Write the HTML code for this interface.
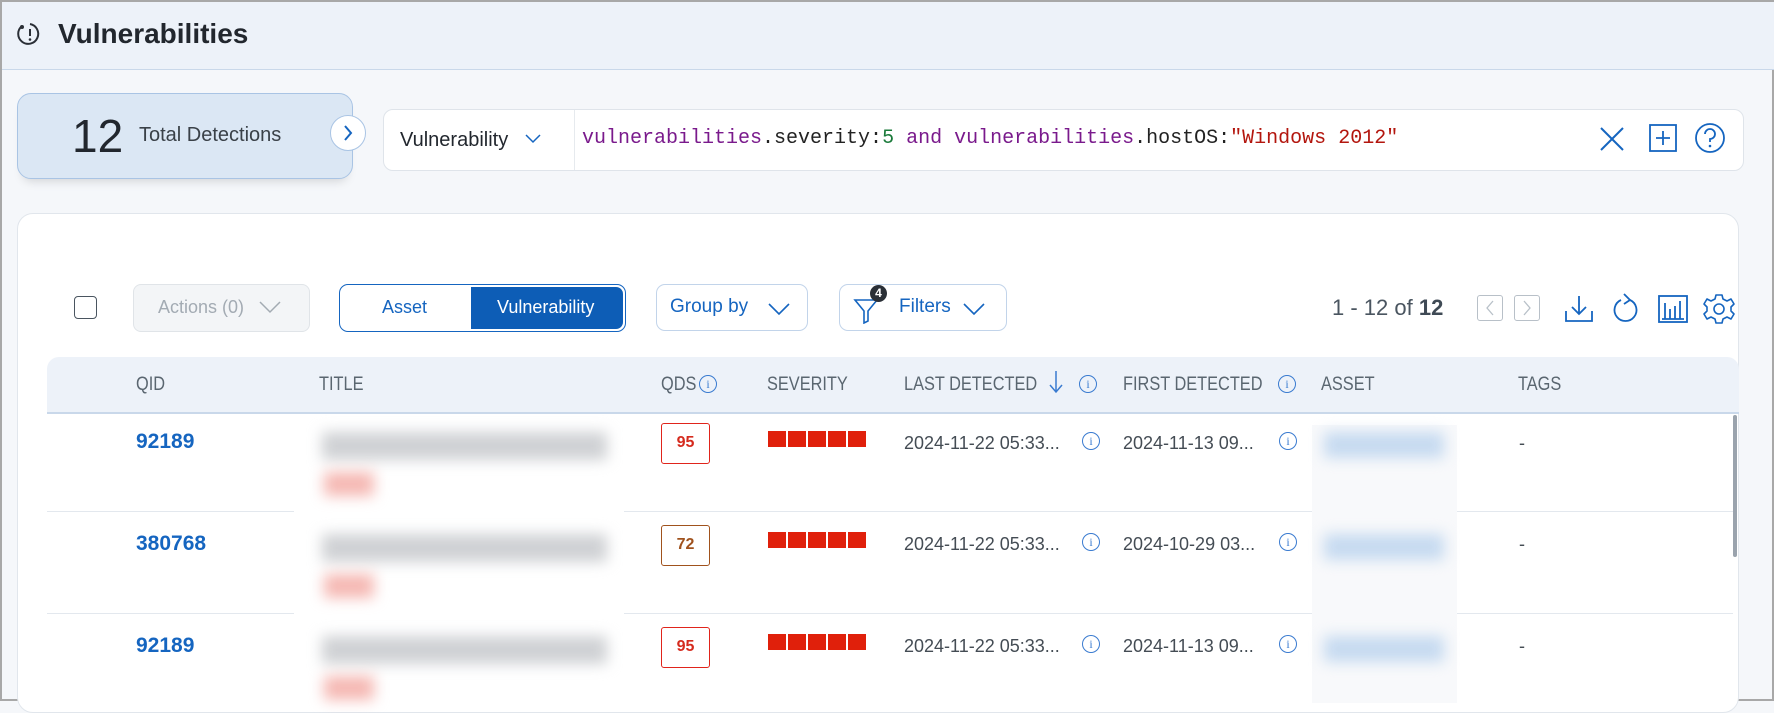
<!DOCTYPE html>
<html><head><meta charset="utf-8"><style>
*{box-sizing:border-box;margin:0;padding:0}
body{width:1774px;height:701px;overflow:hidden;background:#f5f7fa;font-family:"Liberation Sans",sans-serif;position:relative;border:2px solid #a8a8a8}
.abs{position:absolute}
.hdr{left:0;top:0;width:1774px;height:68px;background:#edf2f9;border-bottom:1px solid #c9d8ea}
.blur{filter:blur(7px)}
.th{top:355px;font-size:19px;color:#5a6670;line-height:55px;transform:scaleX(0.86);transform-origin:left center;white-space:nowrap}
.qid{font-size:21px;font-weight:bold;color:#1565c0}
.dt{font-size:18px;color:#444c54;white-space:nowrap}
.badge{width:49px;height:41px;border:1.5px solid #e0241b;border-radius:3px;font-size:16px;font-weight:bold;color:#d52b1e;text-align:center;line-height:38px;background:#fff}
.sev{height:16px;display:flex;gap:2px}
.sev i{display:block;width:18px;height:16px;background:#e0200b}
.info{width:18px;height:18px;border:1.3px solid #3a7bd0;border-radius:50%;color:#3a7bd0;font-size:12px;text-align:center;line-height:16px;font-family:"Liberation Serif",serif}
.line{height:1px;background:#e3e8ee}
</style></head><body>
<div class="abs hdr"></div>
<svg class="abs" style="left:14px;top:18px" width="28" height="28" viewBox="0 0 28 28"><path d="M6 6 A10 10 0 1 0 14 4" fill="none" stroke="#2a2f36" stroke-width="2"/><circle cx="6" cy="7" r="2" fill="#2a2f36"/><line x1="14" y1="9" x2="14" y2="16" stroke="#2a2f36" stroke-width="2"/><circle cx="14" cy="19.5" r="1.3" fill="#2a2f36"/></svg>
<div class="abs" style="left:56px;top:16px;font-size:28px;font-weight:bold;color:#22272e">Vulnerabilities</div>

<div class="abs" style="left:15px;top:91px;width:336px;height:86px;background:#dbe7f4;border:1px solid #a9c4e4;border-radius:14px;box-shadow:0 8px 10px -6px rgba(0,0,0,.15)"></div>
<div class="abs" style="left:70px;top:107px;font-size:46px;color:#22272e">12</div>
<div class="abs" style="left:137px;top:122px;font-size:20px;color:#3a4148">Total Detections</div>
<div class="abs" style="left:328px;top:113px;width:36px;height:36px;border-radius:50%;background:#fff;border:1px solid #a9c4e4"></div>
<svg class="abs" style="left:338px;top:122px" width="16" height="18"><path d="M5 2 L11 9 L5 16" fill="none" stroke="#1565c0" stroke-width="2"/></svg>

<div class="abs" style="left:381px;top:107px;width:1361px;height:62px;background:#fff;border:1px solid #dfe4ea;border-radius:10px"></div>
<div class="abs" style="left:572px;top:108px;width:1px;height:60px;background:#e6eaee"></div>
<div class="abs" style="left:398px;top:127px;font-size:20px;color:#22272e">Vulnerability</div>
<svg class="abs" style="left:523px;top:131px" width="16" height="12"><path d="M1 2 L8 9 L15 2" fill="none" stroke="#1565c0" stroke-width="1.5"/></svg>
<div class="abs" style="left:580px;top:125px;font-family:'Liberation Mono',monospace;font-size:20px;color:#222;white-space:pre"><span style="color:#7a1a8c">vulnerabilities</span>.severity:<span style="color:#1a7a3a">5</span> <span style="color:#7a1a8c">and</span> <span style="color:#7a1a8c">vulnerabilities</span>.hostOS:<span style="color:#b3160e">"Windows 2012"</span></div>
<svg class="abs" style="left:1597px;top:124px" width="26" height="26"><path d="M2 2 L24 24 M24 2 L2 24" stroke="#1565c0" stroke-width="2"/></svg>
<svg class="abs" style="left:1647px;top:122px" width="28" height="28"><rect x="1" y="1" width="26" height="26" fill="none" stroke="#1565c0" stroke-width="1.8"/><path d="M14 7 V21 M7 14 H21" stroke="#1565c0" stroke-width="1.8"/></svg>
<svg class="abs" style="left:1692px;top:120px" width="32" height="32"><circle cx="16" cy="16" r="14" fill="none" stroke="#1565c0" stroke-width="1.8"/><path d="M11 12 A5 5 0 1 1 16 17 V20" fill="none" stroke="#1565c0" stroke-width="1.8"/><circle cx="16" cy="24" r="1.3" fill="#1565c0"/></svg>

<div class="abs" style="left:15px;top:211px;width:1722px;height:500px;background:#fff;border:1px solid #e1e6ec;border-radius:16px"></div>

<div class="abs" style="left:72px;top:294px;width:23px;height:23px;border:1.5px solid #4a5560;border-radius:4px"></div>
<div class="abs" style="left:131px;top:282px;width:177px;height:48px;background:#f3f5f7;border:1px solid #e0e4e8;border-radius:8px"></div>
<div class="abs" style="left:156px;top:295px;font-size:18px;color:#a3abb3">Actions (0)</div>
<svg class="abs" style="left:257px;top:298px" width="22" height="14"><path d="M1 2 L11 12 L21 2" fill="none" stroke="#a3abb3" stroke-width="1.5"/></svg>
<div class="abs" style="left:337px;top:282px;width:287px;height:48px;border:1.5px solid #1565c0;border-radius:9px;background:#fff"></div>
<div class="abs" style="left:469px;top:285px;width:152px;height:42px;background:#0d5db6;border-radius:0 7px 7px 0"></div>
<div class="abs" style="left:380px;top:295px;font-size:18px;color:#1565c0">Asset</div>
<div class="abs" style="left:495px;top:295px;font-size:18px;color:#fff">Vulnerability</div>
<div class="abs" style="left:654px;top:282px;width:152px;height:47px;border:1px solid #c2d4ea;border-radius:9px"></div>
<div class="abs" style="left:668px;top:294px;font-size:19px;color:#1565c0">Group by</div>
<svg class="abs" style="left:766px;top:300px" width="22" height="14"><path d="M1 2 L11 12 L21 2" fill="none" stroke="#1565c0" stroke-width="1.6"/></svg>
<div class="abs" style="left:837px;top:282px;width:168px;height:47px;border:1px solid #c2d4ea;border-radius:9px"></div>
<svg class="abs" style="left:851px;top:292px" width="28" height="30"><path d="M2 6 H24 L15 17 V27 L11 29 V17 Z" fill="none" stroke="#1565c0" stroke-width="1.6"/></svg>
<div class="abs" style="left:868px;top:283px;width:17px;height:17px;border-radius:50%;background:#2a2f36;color:#fff;font-size:12px;font-weight:bold;text-align:center;line-height:17px">4</div>
<div class="abs" style="left:897px;top:294px;font-size:19px;color:#1565c0">Filters</div>
<svg class="abs" style="left:961px;top:300px" width="22" height="14"><path d="M1 2 L11 12 L21 2" fill="none" stroke="#1565c0" stroke-width="1.6"/></svg>

<div class="abs" style="left:1330px;top:293px;font-size:22px;color:#4a5560">1 - 12 of <b style="color:#3f4a55">12</b></div>
<div class="abs" style="left:1475px;top:293px;width:26px;height:26px;border:1.5px solid #b8c0c8;border-radius:3px"></div>
<svg class="abs" style="left:1481px;top:298px" width="14" height="16"><path d="M10 1 L4 8 L10 15" fill="none" stroke="#b8c0c8" stroke-width="1.3"/></svg>
<div class="abs" style="left:1512px;top:293px;width:26px;height:26px;border:1.5px solid #b8c0c8;border-radius:3px"></div>
<svg class="abs" style="left:1518px;top:298px" width="14" height="16"><path d="M4 1 L10 8 L4 15" fill="none" stroke="#b8c0c8" stroke-width="1.3"/></svg>
<svg class="abs" style="left:1562px;top:292px" width="30" height="30"><path d="M15 2 V20 M8 13 L15 20 L22 13 M2 17 V27 H28 V17" fill="none" stroke="#1565c0" stroke-width="1.8"/></svg>
<svg class="abs" style="left:1610px;top:290px" width="28" height="34"><path d="M18 8 A11 11 0 1 1 9 8" fill="none" stroke="#1565c0" stroke-width="1.8"/><path d="M12 2 L18 8 L12 12" fill="none" stroke="#1565c0" stroke-width="1.8"/></svg>
<svg class="abs" style="left:1656px;top:293px" width="30" height="28"><rect x="1" y="1" width="28" height="26" fill="none" stroke="#1565c0" stroke-width="1.8"/><path d="M7 24 V8 M12 24 V14 M17 24 V11 M22 24 V6 M4 24 H26" stroke="#1565c0" stroke-width="1.8"/></svg>
<svg class="abs" style="left:1701px;top:291px" width="32" height="32" viewBox="0 0 32 32"><path d="M13 2 H19 L20 6 L24 8 L28 6 L31 11 L28 14 V18 L31 21 L28 26 L24 24 L20 26 L19 30 H13 L12 26 L8 24 L4 26 L1 21 L4 18 V14 L1 11 L4 6 L8 8 L12 6 Z" fill="none" stroke="#1565c0" stroke-width="1.6" stroke-linejoin="round"/><circle cx="16" cy="16" r="5" fill="none" stroke="#1565c0" stroke-width="1.6"/></svg>

<div class="abs" style="left:45px;top:355px;width:1692px;height:57px;background:#edf2f9;border-radius:12px 12px 0 0;border-bottom:2px solid #c9d8ea"></div>
<div class="abs th" style="left:134px">QID</div>
<div class="abs th" style="left:317px">TITLE</div>
<div class="abs th" style="left:659px">QDS</div>
<div class="abs info" style="left:697px;top:373px">i</div>
<div class="abs th" style="left:902px">LAST DETECTED</div>
<div class="abs th" style="left:765px">SEVERITY</div>
<svg class="abs" style="left:1047px;top:368px" width="14" height="24"><path d="M7 1 V22 M1 15 L7 22 L13 15" fill="none" stroke="#3a7bd0" stroke-width="1.5"/></svg>
<div class="abs info" style="left:1077px;top:373px">i</div>
<div class="abs th" style="left:1121px">FIRST DETECTED</div>
<div class="abs info" style="left:1276px;top:373px">i</div>
<div class="abs th" style="left:1319px">ASSET</div>
<div class="abs th" style="left:1516px">TAGS</div>

<div class="abs" style="left:1731px;top:413px;width:4px;height:142px;background:#9aa3ad;border-radius:2px"></div>

<div class="abs line" style="left:45px;top:509px;width:1686px"></div>
<div class="abs line" style="left:45px;top:611px;width:1686px"></div>

<div class="abs qid" style="left:134px;top:428px">92189</div>
<div class="abs qid" style="left:134px;top:530px">380768</div>
<div class="abs qid" style="left:134px;top:632px">92189</div>

<div class="abs" style="left:292px;top:420px;width:330px;height:281px;background:#fff"></div>
<div class="abs blur" style="left:320px;top:430px;width:285px;height:28px;background:#cfd1d4"></div>
<div class="abs blur" style="left:322px;top:470px;width:50px;height:24px;background:#f5b8b3"></div>
<div class="abs blur" style="left:320px;top:532px;width:285px;height:28px;background:#cfd1d4"></div>
<div class="abs blur" style="left:322px;top:572px;width:50px;height:24px;background:#f5b8b3"></div>
<div class="abs blur" style="left:320px;top:634px;width:285px;height:28px;background:#cfd1d4"></div>
<div class="abs blur" style="left:322px;top:674px;width:50px;height:24px;background:#f5b8b3"></div>

<div class="abs badge" style="left:659px;top:421px">95</div>
<div class="abs badge" style="left:659px;top:523px;border-color:#a0521d;color:#a0521d">72</div>
<div class="abs badge" style="left:659px;top:625px">95</div>

<div class="abs sev" style="left:766px;top:429px"><i></i><i></i><i></i><i></i><i></i></div>
<div class="abs sev" style="left:766px;top:530px"><i></i><i></i><i></i><i></i><i></i></div>
<div class="abs sev" style="left:766px;top:632px"><i></i><i></i><i></i><i></i><i></i></div>

<div class="abs dt" style="left:902px;top:431px">2024-11-22 05:33...</div>
<div class="abs info" style="left:1080px;top:430px">i</div>
<div class="abs dt" style="left:1121px;top:431px">2024-11-13 09...</div>
<div class="abs info" style="left:1277px;top:430px">i</div>
<div class="abs dt" style="left:902px;top:532px">2024-11-22 05:33...</div>
<div class="abs info" style="left:1080px;top:531px">i</div>
<div class="abs dt" style="left:1121px;top:532px">2024-10-29 03...</div>
<div class="abs info" style="left:1277px;top:531px">i</div>
<div class="abs dt" style="left:902px;top:634px">2024-11-22 05:33...</div>
<div class="abs info" style="left:1080px;top:633px">i</div>
<div class="abs dt" style="left:1121px;top:634px">2024-11-13 09...</div>
<div class="abs info" style="left:1277px;top:633px">i</div>

<div class="abs" style="left:1310px;top:423px;width:145px;height:278px;background:#f8f9fb"></div>
<div class="abs blur" style="left:1322px;top:430px;width:120px;height:26px;background:#c6daf0"></div>
<div class="abs blur" style="left:1322px;top:532px;width:120px;height:26px;background:#c6daf0"></div>
<div class="abs blur" style="left:1322px;top:634px;width:120px;height:26px;background:#c6daf0"></div>

<div class="abs dt" style="left:1517px;top:431px">-</div>
<div class="abs dt" style="left:1517px;top:532px">-</div>
<div class="abs dt" style="left:1517px;top:634px">-</div>
</body></html>
